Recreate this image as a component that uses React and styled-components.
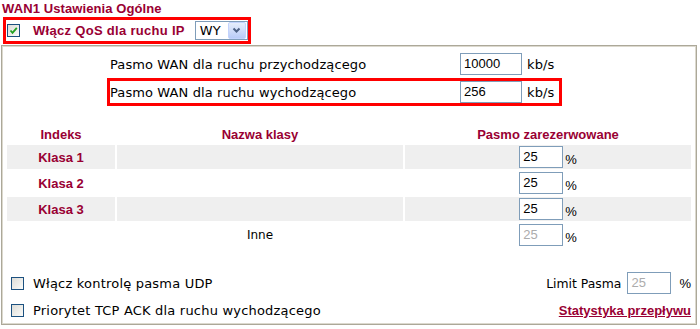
import { Fragment } from 'react';
import styled, { createGlobalStyle } from 'styled-components';

const MAROON = '#990033';
const VERDANA = `"DejaVu Sans", Verdana, sans-serif`;
const ARIAL = `"Liberation Sans", Arial, sans-serif`;

const GlobalStyle = createGlobalStyle`
  body {
    margin: 0;
    background: #fff;
  }
`;

const Page = styled.div`
  width: 700px;
  height: 329px;
  overflow: hidden;
  background: #fff;
  font-family: ${VERDANA};
`;

const Title = styled.div`
  height: 17px;
  padding-left: 2px;
  font: bold 13px/17px ${ARIAL};
  letter-spacing: 0.1px;
  color: ${MAROON};
`;

const QosBar = styled.div`
  display: flex;
  align-items: center;
  width: 248px;
  height: 27px;
  box-sizing: border-box;
  margin-left: 3px;
  border: 3px solid #ff0000;
  padding-left: 1px;
`;

const QosLabel = styled.span`
  margin-left: 13px;
  font: bold 13px ${ARIAL};
  letter-spacing: 0.3px;
  color: ${MAROON};
`;

const Select = styled.div`
  display: flex;
  align-items: center;
  justify-content: space-between;
  width: 53px;
  height: 19px;
  box-sizing: border-box;
  margin-left: 10px;
  padding: 0 1px 0 4px;
  border: 1px solid #7f9db9;
  font: 13px ${VERDANA};
  color: #000;
`;

const SelectButton = styled.span`
  display: flex;
  align-items: center;
  justify-content: center;
  width: 16px;
  height: 15px;
  border: 1px solid #c3d3fd;
  border-radius: 2px;
  background: linear-gradient(#e6eefc, #b9cbf7);
`;

const Box = styled.span`
  display: inline-flex;
  align-items: center;
  justify-content: center;
  flex: none;
  width: 13px;
  height: 13px;
  box-sizing: border-box;
  border: 1px solid #1c5180;
  background: linear-gradient(135deg, #dcdcd7, #fbfbf9);
`;

const Panel = styled.div`
  height: 280px;
  box-sizing: border-box;
  margin: 1px 3px 0 1px;
  border: 1px solid #aca899;
  box-shadow: inset 1px 1px 0 #dcd9ce, inset -1px -1px 0 #dcd9ce;
  padding: 1px;
`;

const BwList = styled.div`
  display: flex;
  flex-direction: column;
  gap: 6px;
  padding-top: 6px;
  margin-left: 107px;
`;

const BwRow = styled.div`
  display: grid;
  grid-template-columns: 350px 62px auto;
  align-items: center;
  width: 449px;
  height: 22px;
  outline: ${(p) => (p.$marked ? '3px solid #ff0000' : 'none')};
  font-size: 13px;
  letter-spacing: 0.1px;
  color: #000;
`;

const Field = styled.div`
  width: ${(p) => p.$w}px;
  height: 22px;
  box-sizing: border-box;
  padding: 0 3px;
  border: 1px solid #7f9db9;
  background: #fff;
  font: 13px/20px ${ARIAL};
  letter-spacing: 0;
  color: ${(p) => (p.$disabled ? '#acacac' : '#000')};
`;

const Unit = styled.span`
  margin-left: 5px;
`;

const ClassGrid = styled.div`
  display: grid;
  grid-template-columns: 108px 286px 286px;
  gap: 2px;
  margin: 19px 0 0 4px;
`;

const HeadCell = styled.div`
  display: flex;
  align-items: flex-end;
  justify-content: center;
  height: 21px;
  font: bold 13px/16px ${ARIAL};
  color: ${MAROON};
`;

const Cell = styled.div`
  display: flex;
  align-items: center;
  justify-content: center;
  height: 24px;
  background: ${(p) => (p.$shade ? '#efefef' : '#fff')};
  font: ${(p) => (p.$strong ? `bold 13px ${ARIAL}` : `12px ${VERDANA}`)};
  color: ${(p) => (p.$strong ? MAROON : '#000')};
`;

const Percent = styled.span`
  margin-left: 2px;
  padding-top: 5px;
  font: 13px ${ARIAL};
`;

const Options = styled.div`
  display: flex;
  flex-direction: column;
  gap: 6px;
  margin-top: 25px;
  padding: 0 4px 0 8px;
`;

const OptRow = styled.div`
  display: flex;
  align-items: center;
  justify-content: space-between;
  height: ${(p) => p.$h}px;
  font-size: 13px;
  color: #000;
`;

const Check = styled.label`
  display: flex;
  align-items: center;
  gap: 9px;
  letter-spacing: 0.2px;
`;

const Limit = styled.div`
  display: flex;
  align-items: center;
  gap: 6px;
  font-size: 12.4px;
`;

const LimitUnit = styled.span`
  margin-left: 2px;
  font: 13px ${ARIAL};
`;

const StatsLink = styled.a`
  font: bold 13px ${ARIAL};
  color: ${MAROON};
  text-decoration: underline;
`;

const CheckBox = ({ checked }) => (
  <Box>
    {checked && (
      <svg width="9" height="9" viewBox="0 0 9 9">
        <path d="M1.5 4.5 L3.5 6.8 L7.8 1.8" fill="none" stroke="#21a121" strokeWidth="1.8" />
      </svg>
    )}
  </Box>
);

const classes = [
  { name: 'Klasa 1', value: '25' },
  { name: 'Klasa 2', value: '25' },
  { name: 'Klasa 3', value: '25' },
];

const App = () => (
  <Page>
    <GlobalStyle />
    <Title>WAN1 Ustawienia Ogólne</Title>
    <QosBar>
      <CheckBox checked />
      <QosLabel>Włącz QoS dla ruchu IP</QosLabel>
      <Select>
        WY
        <SelectButton>
          <svg width="9" height="7" viewBox="0 0 9 7">
            <path d="M1.5 1.5 L4.5 4.5 L7.5 1.5" fill="none" stroke="#4d6185" strokeWidth="2" />
          </svg>
        </SelectButton>
      </Select>
    </QosBar>

    <Panel>
      <BwList>
        <BwRow>
          <span>Pasmo WAN dla ruchu przychodzącego</span>
          <Field $w={62}>10000</Field>
          <Unit>kb/s</Unit>
        </BwRow>
        <BwRow $marked>
          <span>Pasmo WAN dla ruchu wychodzącego</span>
          <Field $w={62}>256</Field>
          <Unit>kb/s</Unit>
        </BwRow>
      </BwList>

      <ClassGrid>
        <HeadCell>Indeks</HeadCell>
        <HeadCell>Nazwa klasy</HeadCell>
        <HeadCell>Pasmo zarezerwowane</HeadCell>
        {classes.map((c, i) => (
          <Fragment key={c.name}>
            <Cell $shade={i !== 1} $strong>{c.name}</Cell>
            <Cell $shade={i !== 1} />
            <Cell $shade={i !== 1}>
              <Field $w={44}>{c.value}</Field>
              <Percent>%</Percent>
            </Cell>
          </Fragment>
        ))}
        <Cell />
        <Cell>Inne</Cell>
        <Cell>
          <Field $w={44} $disabled>25</Field>
          <Percent>%</Percent>
        </Cell>
      </ClassGrid>

      <Options>
        <OptRow $h={22}>
          <Check>
            <CheckBox />
            Włącz kontrolę pasma UDP
          </Check>
          <Limit>
            Limit Pasma
            <Field $w={44} $disabled>25</Field>
            <LimitUnit>%</LimitUnit>
          </Limit>
        </OptRow>
        <OptRow $h={21}>
          <Check>
            <CheckBox />
            Priorytet TCP ACK dla ruchu wychodzącego
          </Check>
          <StatsLink>Statystyka przepływu</StatsLink>
        </OptRow>
      </Options>
    </Panel>
  </Page>
);

export default App;
